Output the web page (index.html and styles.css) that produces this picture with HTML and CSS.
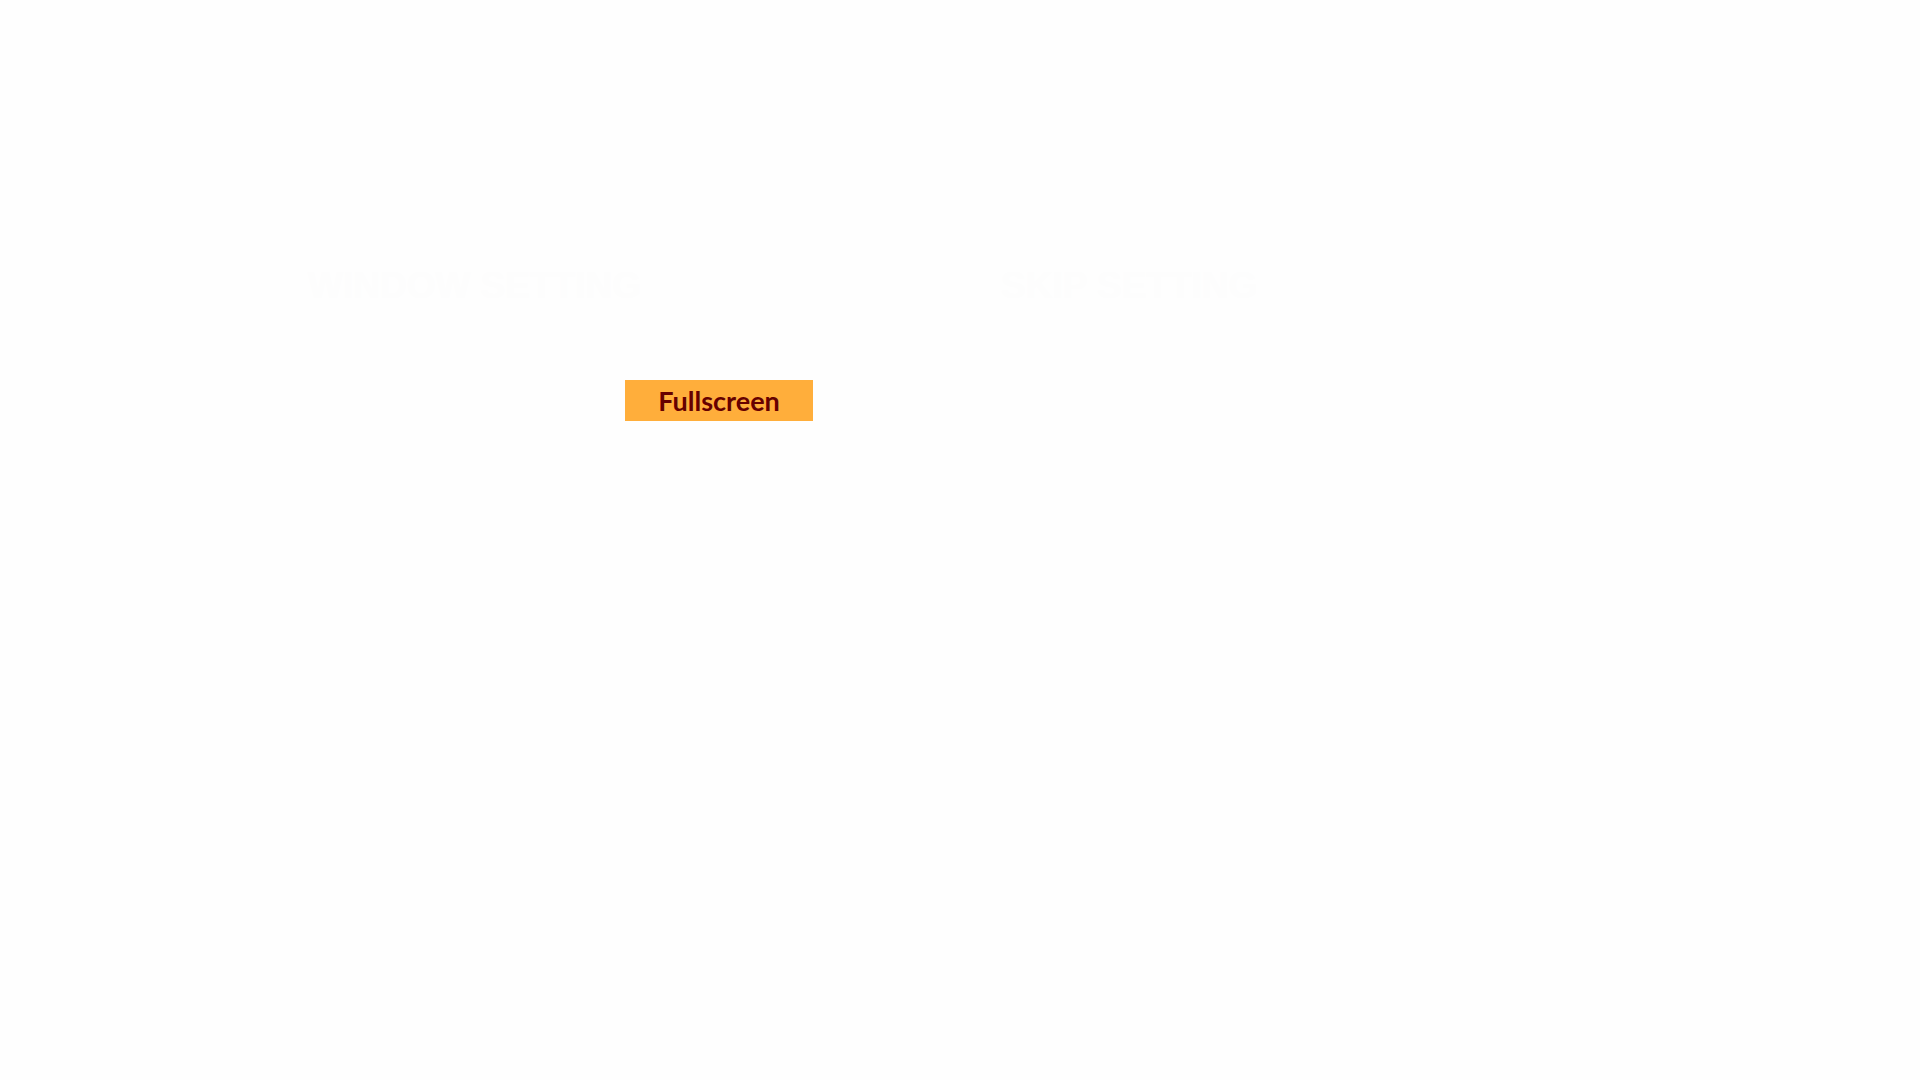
FILE: index.html
```html
<!DOCTYPE html>
<html lang="en">
<head>
<meta charset="utf-8">
<meta name="viewport" content="width=device-width, initial-scale=1">
<title>Settings</title>
<link rel="stylesheet" href="styles.css">
</head>
<body>
<main class="settings">
  <section class="group">
    <h2 class="group-title">WINDOW SETTING</h2>
    <div class="options">
      <button class="option" type="button">Fullscreen</button>
    </div>
  </section>
  <section class="group">
    <h2 class="group-title">SKIP SETTING</h2>
  </section>
</main>
</body>
</html>
```
FILE: styles.css
```css
* {
  box-sizing: border-box;
}

body {
  margin: 0;
  background: #fefefe;
  font-family: "Liberation Sans", Arial, sans-serif;
}

.settings {
  display: grid;
  grid-template-columns: 1fr 1fr;
  gap: 40px;
  padding: 264px 266px 0 308px;
}

.group-title {
  margin: 0;
  color: #fdfdfd;
  font-size: 37px;
  font-weight: 700;
  line-height: 44px;
}

.options {
  display: flex;
  padding: 72px 0 0 317px;
}

.option {
  width: 188px;
  height: 41px;
  margin: 0;
  padding: 0;
  border: 0;
  background: #ffae3b;
  color: #660000;
  font-family: "Gill Sans", "Gill Sans MT", Lato, sans-serif;
  font-size: 27px;
  font-weight: 700;
  line-height: 41px;
}
```
